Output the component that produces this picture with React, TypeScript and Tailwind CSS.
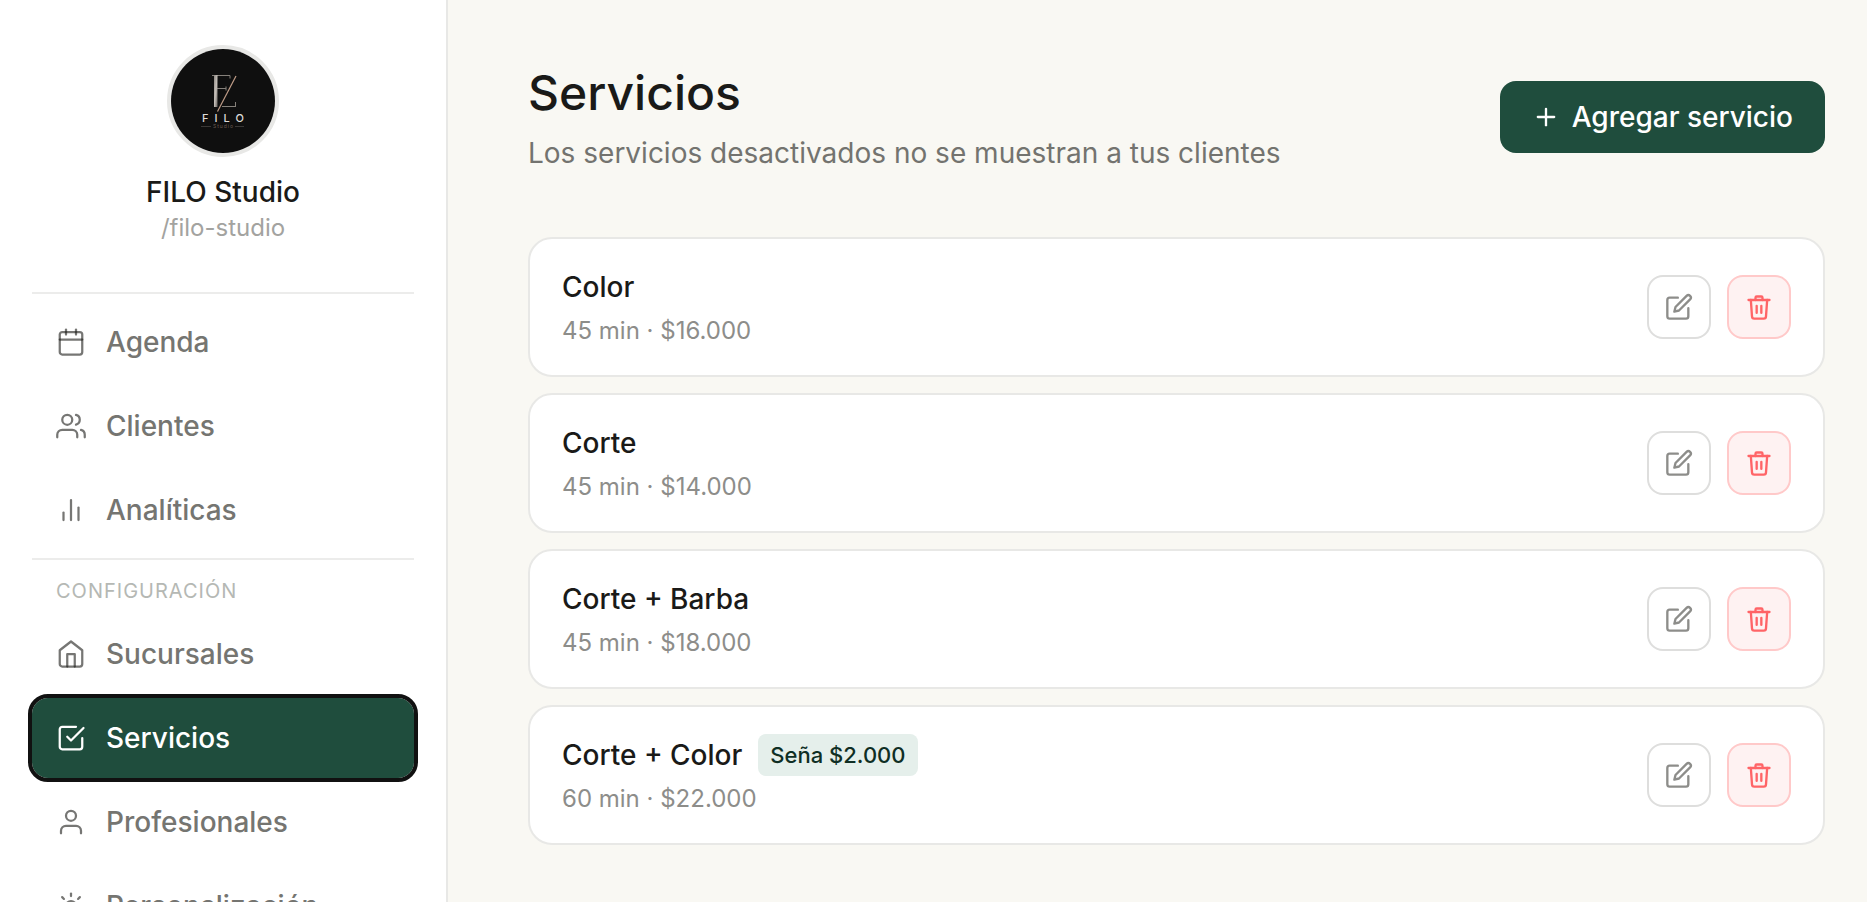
import React from "react";
import type { IconType } from "react-icons";
import {
  FiBarChart2,
  FiCalendar,
  FiCheckSquare,
  FiEdit,
  FiHome,
  FiPlus,
  FiUser,
  FiUsers,
} from "react-icons/fi";
import { Sun, type LucideIcon } from "lucide-react";

type NavEntry = {
  label: string;
  icon: IconType | LucideIcon;
  active?: boolean;
};

type Service = {
  name: string;
  minutes: number;
  price: string;
  deposit?: string;
};

const mainNav: NavEntry[] = [
  { label: "Agenda", icon: FiCalendar },
  { label: "Clientes", icon: FiUsers },
  { label: "Analíticas", icon: FiBarChart2 },
];

const configNav: NavEntry[] = [
  { label: "Sucursales", icon: FiHome },
  { label: "Servicios", icon: FiCheckSquare, active: true },
  { label: "Profesionales", icon: FiUser },
  { label: "Personalización", icon: Sun },
];

const services: Service[] = [
  { name: "Color", minutes: 45, price: "$16.000" },
  { name: "Corte", minutes: 45, price: "$14.000" },
  { name: "Corte + Barba", minutes: 45, price: "$18.000" },
  { name: "Corte + Color", minutes: 60, price: "$22.000", deposit: "$2.000" },
];

export default function App() {
  return (
    <div className="flex h-screen overflow-hidden bg-[#f9f8f3] font-['Inter',sans-serif] text-[28px] leading-[34px] text-[#1a1a18]">
      <Sidebar />
      <main className="min-w-0 flex-1 pt-16 pr-[42px] pl-20">
        <header className="flex items-center justify-between">
          <div>
            <h1 className="text-[48px] leading-[58px] font-medium">Servicios</h1>
            <p className="mt-3.5 text-[#73736f]">
              Los servicios desactivados no se muestran a tus clientes
            </p>
          </div>
          <button
            type="button"
            className="flex h-[72px] items-center gap-3 rounded-2xl bg-[#1f4d3d] px-8 font-medium text-white"
          >
            <FiPlus size={28} />
            Agregar servicio
          </button>
        </header>

        <ul className="mt-[67px] flex flex-col gap-4">
          {services.map((service) => (
            <ServiceCard key={service.name} service={service} />
          ))}
        </ul>
      </main>
    </div>
  );
}

const Sidebar = () => {
  return (
    <aside className="flex w-[448px] shrink-0 flex-col overflow-hidden border-r-2 border-[#e8e8e6] bg-white px-8 pt-[45px]">
      <div className="flex flex-col items-center border-b-2 border-[#ececeb] pb-[49px]">
        <Logo />
        <div className="mt-[18px] font-medium">FILO Studio</div>
        <div className="mt-1 text-2xl leading-[30px] text-[#a3a3a0]">/filo-studio</div>
      </div>

      <nav className="flex flex-col">
        <div className="flex flex-col gap-1 border-b-2 border-[#ececeb] py-2">
          {mainNav.map((entry) => (
            <NavItem key={entry.label} entry={entry} />
          ))}
        </div>
        <div className="px-6 pt-[18px] pb-2.5 text-[20px] leading-[26px] tracking-[0.05em] text-[#b5b8b4]">
          CONFIGURACIÓN
        </div>
        <div className="flex flex-col gap-1">
          {configNav.map((entry) => (
            <NavItem key={entry.label} entry={entry} />
          ))}
        </div>
      </nav>
    </aside>
  );
};

const NavItem = ({ entry }: { entry: NavEntry }) => {
  const Icon = entry.icon;
  return (
    <a
      href="#"
      aria-current={entry.active ? "page" : undefined}
      className={
        entry.active
          ? "flex h-20 items-center gap-5 rounded-2xl bg-[#1f4d3d] px-6 font-medium text-white outline-4 outline-[#111111]"
          : "flex h-20 items-center gap-5 rounded-2xl px-6 font-medium text-[#757571]"
      }
    >
      <Icon
        size={30}
        strokeWidth={1.8}
        className={entry.active ? "shrink-0" : "shrink-0 text-[#1a1a18]/60"}
      />
      {entry.label}
    </a>
  );
};

const ServiceCard = ({ service }: { service: Service }) => {
  return (
    <li className="flex h-[140px] items-center justify-between rounded-3xl border-2 border-[#e8e8e6] bg-white px-8">
      <div className="pt-px">
        <div className="flex h-[34px] items-center gap-4">
          <h2 className="font-medium">{service.name}</h2>
          {service.deposit && (
            <span className="-my-1 rounded-lg bg-[#e5efeb] px-3 py-2 text-[22px] leading-[26px] font-medium text-[#0f2e24]">
              Seña {service.deposit}
            </span>
          )}
        </div>
        <p className="mt-[13px] text-2xl leading-7 text-[#8d8d8a]">
          {service.minutes} min · {service.price}
        </p>
      </div>
      <div className="flex gap-4">
        <button
          type="button"
          aria-label={`Editar ${service.name}`}
          className="flex size-16 items-center justify-center rounded-2xl border-2 border-[#dededd] bg-white text-[#8d8d8a]"
        >
          <FiEdit size={28} />
        </button>
        <button
          type="button"
          aria-label={`Eliminar ${service.name}`}
          className="flex size-16 items-center justify-center rounded-2xl border-2 border-[#ffc9c9] bg-[#fef2f2] text-[#ff6467]"
        >
          <TrashIcon />
        </button>
      </div>
    </li>
  );
};

const TrashIcon = () => (
  <svg
    width="28"
    height="28"
    viewBox="0 0 24 24"
    fill="none"
    stroke="currentColor"
    strokeWidth="2"
    strokeLinecap="round"
    strokeLinejoin="round"
  >
    <path d="M3 6h18" />
    <path d="M19 6l-1 14a2 2 0 0 1-2 2H8a2 2 0 0 1-2-2L5 6" />
    <path d="M10 11v6M14 11v6" />
    <path d="M9 6V4a1 1 0 0 1 1-1h4a1 1 0 0 1 1 1v2" />
  </svg>
);

const Logo = () => (
  <svg className="size-28 rounded-full border-4 border-[#e8e8e6]" viewBox="0 0 104 104">
    <defs>
      <linearGradient id="metal" x1="0" y1="0" x2="1" y2="1">
        <stop offset="0" stopColor="#8b8681" />
        <stop offset="0.5" stopColor="#c5bfb9" />
        <stop offset="1" stopColor="#6c6763" />
      </linearGradient>
    </defs>
    <rect width="104" height="104" fill="#0f0f0f" />
    {/* monogram */}
    <path
      d="M41 26.500h18v3M46 39.500h9M55 37.500v4M51 57.500h14M64.500 53v4"
      fill="none"
      stroke="#85807a"
    />
    <rect x="43" y="26" width="3.500" height="32" fill="url(#metal)" />
    <path d="M65 27 46.500 62.500" stroke="#c09d88" strokeWidth="1.200" />
    <text
      x="55"
      y="73"
      textAnchor="middle"
      fontSize="11"
      letterSpacing="6"
      fill="#dddbd8"
      className="font-['Inter',sans-serif] font-medium"
    >
      FILO
    </text>
    <path d="M30 77.500h10M64 77.500h9" stroke="#3a3836" strokeWidth="1" />
    <text
      x="52.500"
      y="79"
      textAnchor="middle"
      fontSize="5"
      letterSpacing="1"
      fill="#6b5a50"
      className="font-['Inter',sans-serif]"
    >
      Studio
    </text>
  </svg>
);
